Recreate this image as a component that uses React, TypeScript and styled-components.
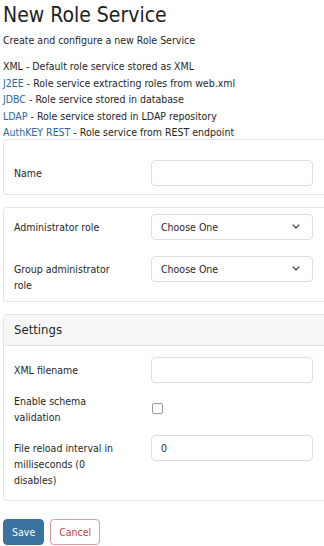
import React from 'react';
import styled, { createGlobalStyle } from 'styled-components';

const GlobalStyle = createGlobalStyle`
  html, body {
    margin: 0;
    padding: 0;
    background: #ffffff;
    overflow: hidden;
  }
  body {
    font-family: 'DejaVu Sans Condensed', 'DejaVu Sans', sans-serif;
    font-size: 10.5px;
    color: #1f1f1f;
  }
`;

const Page = styled.div`
  padding: 0 0 0 3px;
  width: 340px;
`;

const Title = styled.h1`
  font-size: 21px;
  font-weight: 400;
  line-height: 28px;
  margin: 1px 0 3px;
  color: #1e1e1e;
`;

const Subtitle = styled.p`
  margin: 0 0 10px;
  line-height: 16px;
`;

const ServiceList = styled.ul`
  list-style: none;
  margin: 0 0 -2px;
  padding: 0;
  li {
    line-height: 16.5px;
  }
`;

const ServiceLink = styled.a`
  color: #2d68a4;
  text-decoration: none;
`;

const Card = styled.section`
  border: 1px solid #e3e3e3;
  border-radius: 4px;
  margin-bottom: 12px;
  overflow: hidden;
`;

const CardHeader = styled.div`
  background: #f7f7f7;
  border-bottom: 1px solid #e3e3e3;
  height: 30px;
  display: flex;
  align-items: center;
  padding-left: 10px;
  font-size: 13px;
`;

const CardBody = styled.div<{ $gap: number; $top: number; $bottom: number }>`
  display: grid;
  grid-template-columns: 126px 162px;
  column-gap: 11px;
  row-gap: ${(p) => p.$gap}px;
  padding: ${(p) => p.$top}px 10px ${(p) => p.$bottom}px 10px;
`;

const Label = styled.label<{ $pad?: number }>`
  line-height: 16px;
  padding-top: ${(p) => p.$pad ?? 5}px;
  padding-right: 10px;
`;

const TextInput = styled.div`
  box-sizing: border-box;
  height: 26px;
  border: 1px solid #dedede;
  border-radius: 4px;
  display: flex;
  align-items: center;
  padding: 0 9px;
`;

const Select = styled(TextInput)`
  justify-content: space-between;
  padding: 0 12px 0 9px;
`;

const CheckCell = styled.div`
  display: flex;
  align-items: center;
  padding-left: 1px;
`;

const Checkbox = styled.span`
  width: 11px;
  height: 11px;
  border: 1px solid #999;
  border-radius: 2px;
  box-sizing: border-box;
`;

const Actions = styled.div`
  display: flex;
  gap: 6px;
  margin-top: 18px;
`;

const Button = styled.button<{ $variant: 'primary' | 'danger' }>`
  font-family: inherit;
  font-size: 10.5px;
  height: 26px;
  border-radius: 4px;
  padding: 0 8px;
  cursor: pointer;
  background: ${(p) => (p.$variant === 'primary' ? '#3a72a0' : '#fff')};
  color: ${(p) => (p.$variant === 'primary' ? '#fff' : '#c9403c')};
  border: 1px solid ${(p) => (p.$variant === 'primary' ? '#3a72a0' : '#e09a98')};
`;

const Chevron = () => (
  <svg width="8" height="5" viewBox="0 0 8 5" fill="none">
    <path d="M0.7 0.7 L4 4 L7.3 0.7" stroke="#333" strokeWidth="1.2" />
  </svg>
);

const services = [
  { name: 'XML', link: false, text: 'Default role service stored as XML' },
  { name: 'J2EE', link: true, text: 'Role service extracting roles from web.xml' },
  { name: 'JDBC', link: true, text: 'Role service stored in database' },
  { name: 'LDAP', link: true, text: 'Role service stored in LDAP repository' },
  { name: 'AuthKEY REST', link: true, text: 'Role service from REST endpoint' },
];

const App: React.FC = () => (
  <Page>
    <GlobalStyle />
    <Title>New Role Service</Title>
    <Subtitle>Create and configure a new Role Service</Subtitle>
    <ServiceList>
      {services.map((s) => (
        <li key={s.name}>
          {s.link ? <ServiceLink href="#">{s.name}</ServiceLink> : s.name} - {s.text}
        </li>
      ))}
    </ServiceList>

    <Card>
      <CardBody $gap={10} $top={20} $bottom={8}>
        <Label>Name</Label>
        <TextInput />
      </CardBody>
    </Card>

    <Card>
      <CardBody $gap={16} $top={6} $bottom={8}>
        <Label>Administrator role</Label>
        <Select>
          Choose One <Chevron />
        </Select>
        <Label>Group administrator role</Label>
        <Select>
          Choose One <Chevron />
        </Select>
      </CardBody>
    </Card>

    <Card>
      <CardHeader>Settings</CardHeader>
      <CardBody $gap={10} $top={11} $bottom={12}>
        <Label>XML filename</Label>
        <TextInput />
        <Label $pad={0}>Enable schema validation</Label>
        <CheckCell>
          <Checkbox />
        </CheckCell>
        <Label>File reload interval in milliseconds (0 disables)</Label>
        <TextInput>0</TextInput>
      </CardBody>
    </Card>

    <Actions>
      <Button $variant="primary">Save</Button>
      <Button $variant="danger">Cancel</Button>
    </Actions>
  </Page>
);

export default App;
